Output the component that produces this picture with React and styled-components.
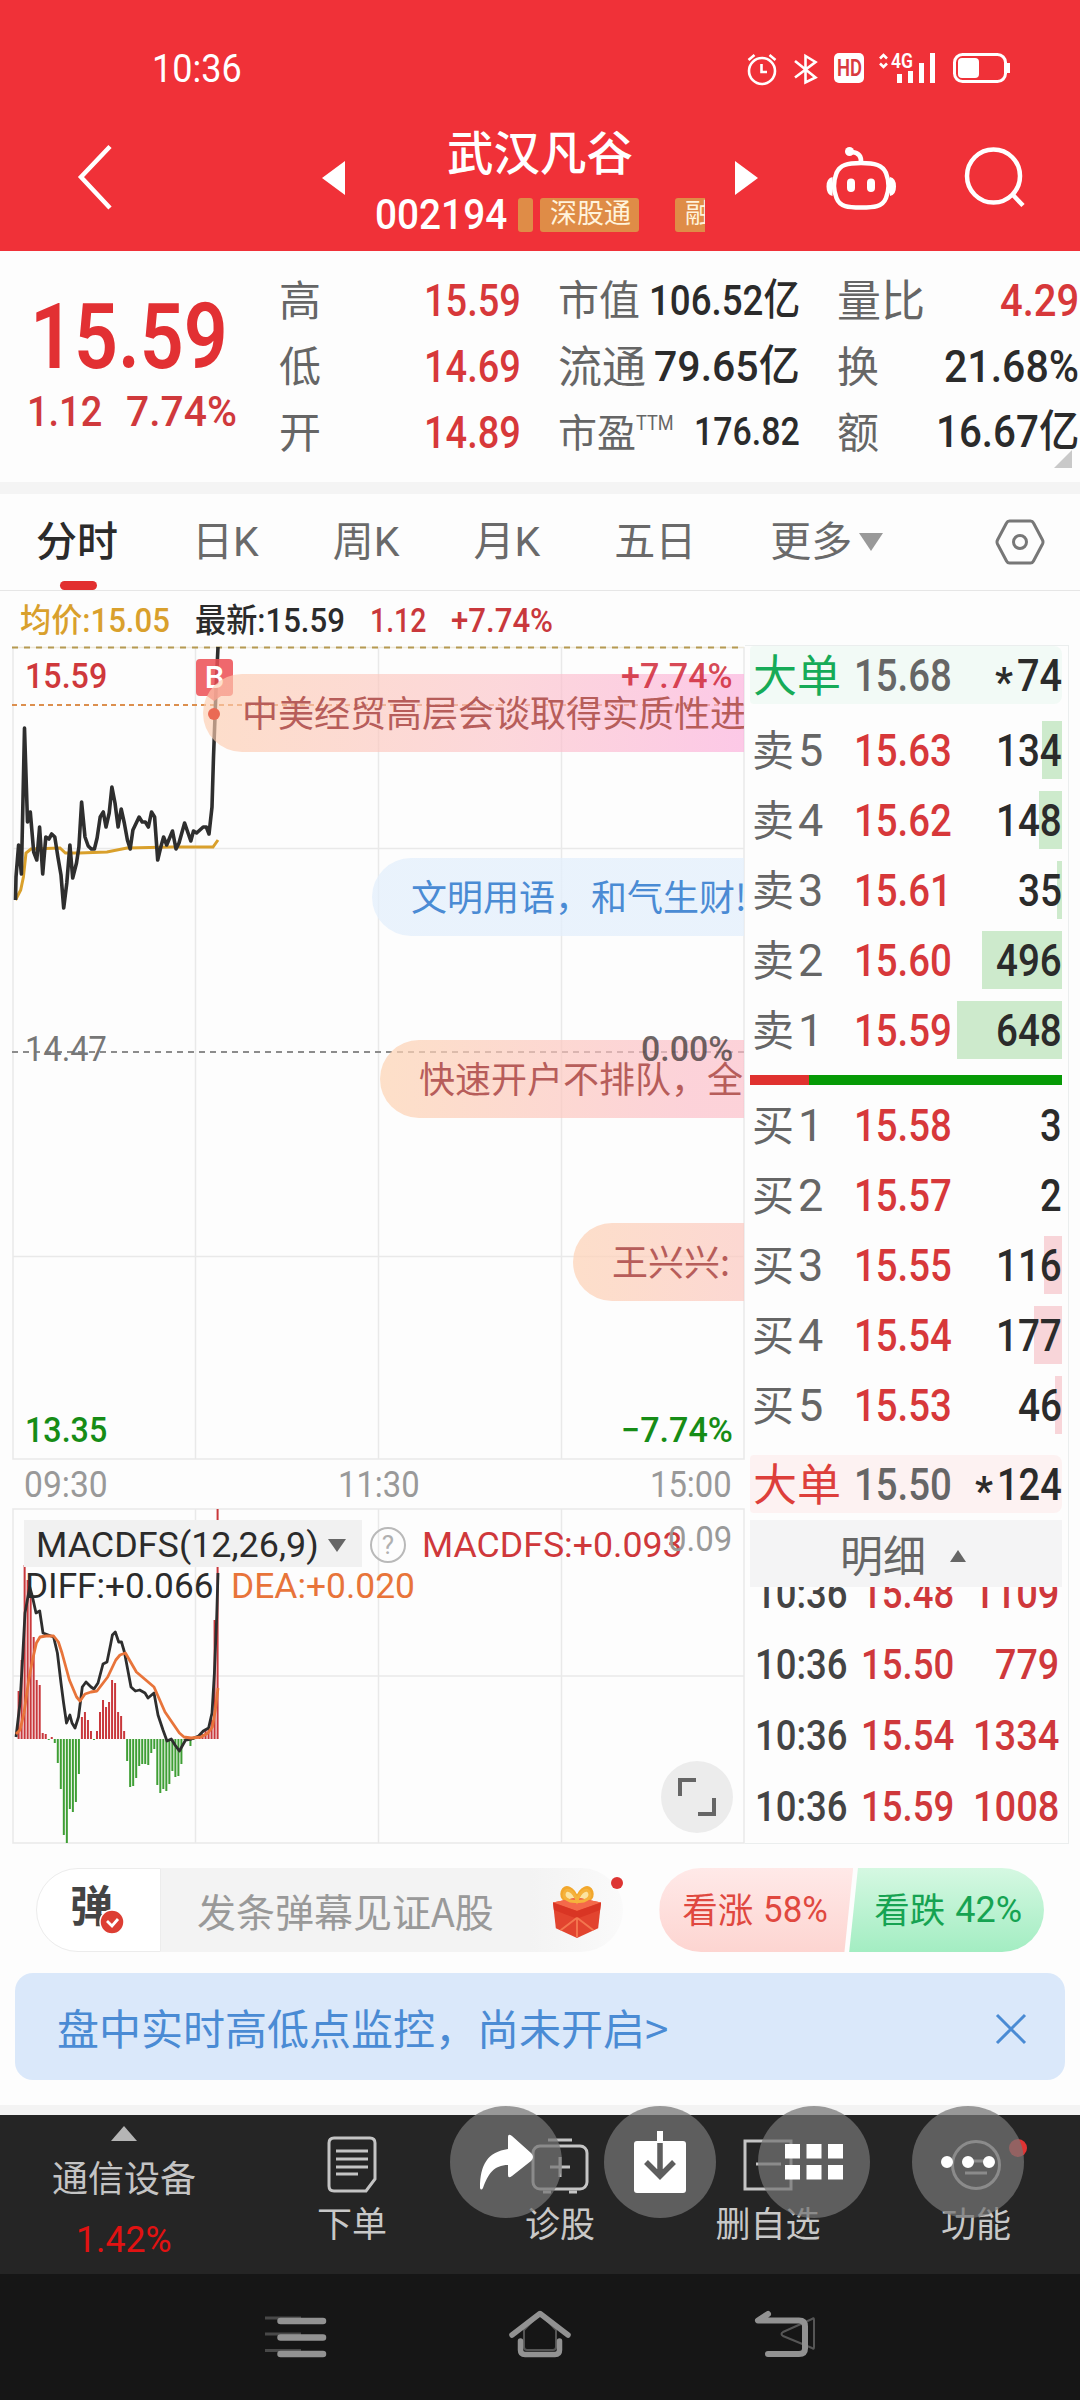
import { useLayoutEffect, useRef, useState } from "react";
import styled, { createGlobalStyle } from "styled-components";

const sells = [
  { label: "卖", level: "5", price: "15.63", volume: "134", bar: 20 },
  { label: "卖", level: "4", price: "15.62", volume: "148", bar: 23 },
  { label: "卖", level: "3", price: "15.61", volume: "35", bar: 5 },
  { label: "卖", level: "2", price: "15.60", volume: "496", bar: 80 },
  { label: "卖", level: "1", price: "15.59", volume: "648", bar: 105 },
];

const buys = [
  { label: "买", level: "1", price: "15.58", volume: "3", bar: 0 },
  { label: "买", level: "2", price: "15.57", volume: "2", bar: 0 },
  { label: "买", level: "3", price: "15.55", volume: "116", bar: 18 },
  { label: "买", level: "4", price: "15.54", volume: "177", bar: 28 },
  { label: "买", level: "5", price: "15.53", volume: "46", bar: 7 },
];

const ticks = [
  { time: "10:36", price: "15.48", volume: "1109" },
  { time: "10:36", price: "15.50", volume: "779" },
  { time: "10:36", price: "15.54", volume: "1334" },
  { time: "10:36", price: "15.59", volume: "1008" },
];

const pricePoints =
  "15.5,900 16,877 18.6,845 21.4,874 24.5,728 27.5,822 30.3,812 33.7,852 36.8,860 39.6,827 42.7,874 45.8,837 48.9,839 51.7,834 54.8,837 57.9,857 61,875 63.7,908 66.8,883 69.9,845 72.7,878 76.5,863 78.9,847 81.6,802 85,837 88.2,846 91.3,849 94.4,849 97.1,838 100.2,817 103.3,812 106,827 109.2,813 111.9,787 115,803 118.1,827 121.2,809 124.3,823 127.4,840 130.2,849 132.9,830 139.1,817 142.2,822 145.3,822 148.4,827 151.5,812 154.6,817 157.7,860 160.8,847 163.6,837 166.7,845 172.5,831 176,849 179,843 184.6,823 190.8,841 193.5,831 196.6,833 203.2,827 206.3,827 209,834 212,807 213.5,757 216,690 218,647";
const averagePoints =
  "15.5,900 20.7,890 23.4,877 26,853 31,849 60,848 65.4,853 79,853 107,852 127,848 172,847 213,847 218,840";
const diffPoints =
  "16,1737 20,1703 22.5,1660 25,1613 29.7,1587 32.5,1597 36,1613 39.7,1611 43,1633 53.6,1637 57.4,1653 61,1683 63.6,1703 66.5,1723 69.9,1715 72,1723 75,1728 78.5,1717 82.3,1687 86,1682 91,1687 94,1689 98,1683 103,1664 107,1662 110.5,1645 112.4,1635 115.3,1632 118.7,1642 121.5,1642 124.4,1652 127.8,1670 131,1687 135.4,1691 139.7,1690 145,1693 148,1698 154,1693 158,1715 163,1730 167,1741 171.3,1739 175,1745 179.4,1751 185.6,1740 191.4,1739 198.6,1736 203.3,1731 208.6,1728 212,1713 214.4,1673 216.7,1617 218,1573";
const deaPoints =
  "16,1734 20,1730 24,1713 28.7,1680 32.5,1660 36.4,1643 40,1637 46,1636 53.6,1636 58.4,1642 62,1653 69.4,1680 76.6,1697 80,1701 85,1694 91,1692 97,1691 107.7,1677 115.8,1660 120,1655 125.4,1653 136.4,1672 154,1687 165,1712 179.4,1733 184,1737 191,1738 201,1737 208,1733 212.4,1727 215.3,1710 218,1688";
const macdBars = [
  48, 79, 174, 159, 142, 102, 59, 54, 6, 5, -1, 2, -4, -24, -50, -96, -104, -70, -73, -63, -35, 22, 27,
  19, 8, -1, 8, 27, 39, 32, 37, 59, 56, 27, 23, 8, -22, -48, -47, -39, -27, -25, -25, -26, -14, -10, -46,
  -54, -50, -52, -45, -32, -38, -37, -25, -1, -1, -7, -1, 2, 3, 5, 9, 10, 19, 119, 230,
];

// condensed figures: squeezes its text to a known width
function Fit({ width, size, weight = 500, color, children }) {
  const ref = useRef(null);
  const [scale, setScale] = useState(1);

  useLayoutEffect(() => {
    setScale(width / ref.current.offsetWidth);
  }, [width, size, weight, children]);

  return (
    <FitBox $width={width} $size={size} $weight={weight} $color={color}>
      <FitText ref={ref} style={{ transform: `scaleX(${scale})` }}>
        {children}
      </FitText>
    </FitBox>
  );
}

function BigOrder({ color, background, price, volume, volumeWidth }) {
  return (
    <BigRow $background={background}>
      <Cn $size={44} $color={color}>大单</Cn>
      <Fit width={98} size={45} color="#666">{price}</Fit>
      <BigVolume>
        <Star>*</Star>
        <Fit width={volumeWidth} size={45}>{volume}</Fit>
      </BigVolume>
    </BigRow>
  );
}

function OrderRow({ item, tint }) {
  return (
    <Order>
      <Cn $size={42} $color="#666">{item.label}</Cn>
      <Fit width={25} size={45} weight={400} color="#666">{item.level}</Fit>
      <OrderPrice>
        <Fit width={98} size={45} color="#d7383a">{item.price}</Fit>
      </OrderPrice>
      <Volume>
        <VolumeBar $tint={tint} style={{ width: item.bar }} />
        <Fit width={item.volume.length * 22} size={45}>{item.volume}</Fit>
      </Volume>
    </Order>
  );
}

function StatusIcons() {
  return (
    <svg width="264" height="36" viewBox="746 51 264 36" fill="none" stroke="#fff">
      <circle cx="762" cy="71" r="13" strokeWidth="2.6" />
      <path d="M761.500 64v8h5.500M748.500 60l6-5M775.500 60l-6-5" strokeWidth="2.6" />
      <path d="M795 61l20.500 16.500-10 5V56l10 6-20.500 15.500" strokeWidth="2.6" />
      <rect x="834" y="53" width="30" height="30" rx="5" fill="#fff" stroke="none" />
      <path d="M880 58.500l3.500-3.500 3.500 3.500M880 63.500l3.500 3.500 3.500-3.500" strokeWidth="2.6" />
      <path d="M899.500 74v9M910.500 71v12M921.500 63v20M932.500 53v30" strokeWidth="5" />
      <rect x="954.500" y="54.500" width="51" height="27" rx="8" strokeWidth="3" />
      <rect x="958" y="58" width="21" height="20" rx="4" fill="#fff" stroke="none" />
      <path d="M1008.500 63v10" strokeWidth="3" />
      <StatusGlyph x="837" y="76" $fill="#d83a40" $size={23} textLength="25" lengthAdjust="spacingAndGlyphs">HD</StatusGlyph>
      <StatusGlyph x="891" y="68" $fill="#fff" $size={20} textLength="22" lengthAdjust="spacingAndGlyphs">4G</StatusGlyph>
    </svg>
  );
}

function PriceChart() {
  return (
    <svg width="733" height="814" viewBox="12 646 733 814" fill="none">
      <path d="M13 647V1459H744V647M195.500 647V1459M378.500 647V1459M561.500 647V1459M13 848.500H744M13 1256.500H744" stroke="#e9e9e9" strokeWidth="1.500" />
      <path d="M12 647.500H744" stroke="#efe9dc" strokeWidth="1.500" />
      <path d="M12 647.500H744" stroke="#b69a52" strokeWidth="2" strokeDasharray="6 6" />
      <path d="M12 705H744" stroke="#dc8f4e" strokeWidth="2" strokeDasharray="5 4" />
      <path d="M12 1052H744" stroke="#8c8c8c" strokeWidth="2" strokeDasharray="6 5" />
      <polyline points={averagePoints} stroke="#d9a02c" strokeWidth="3" />
      <polyline points={pricePoints} stroke="#2e2e2e" strokeWidth="3.600" strokeLinejoin="round" />
    </svg>
  );
}

function MacdChart() {
  return (
    <svg width="733" height="336" viewBox="12 1508 733 336" fill="none">
      <rect x="13" y="1509" width="731" height="334" stroke="#e9e9e9" strokeWidth="1.500" />
      <path d="M195.500 1509V1843M378.500 1509V1843M561.500 1509V1843M13 1676H744" stroke="#e9e9e9" strokeWidth="1.500" />
      {macdBars.map((value, i) => (
        <rect
          key={i}
          x={17.6 + i * 3.015}
          y={value > 0 ? 1739 - value : 1739}
          width="2"
          height={Math.abs(value)}
          fill={value > 0 ? "#c9383c" : "#3f9f35"}
        />
      ))}
      <polyline points={diffPoints} stroke="#2e2e2e" strokeWidth="2.800" strokeLinejoin="round" />
      <polyline points={deaPoints} stroke="#e8743a" strokeWidth="2.800" strokeLinejoin="round" />
    </svg>
  );
}

function Gift() {
  return (
    <svg width="50" height="54" viewBox="0 0 52 56">
      <path d="M26 18C16 19 9 14 11 7c2-7 11-5 15 8 4-13 13-15 15-8 2 7-5 12-15 11z" fill="#fbe3a0" stroke="#f2a72c" strokeWidth="4" />
      <path d="M1 18l25-5 25 5-3 27-22 10L4 45z" fill="#e2442f" />
      <path d="M1 18l25-5 25 5-25 9z" fill="#f4694a" />
      <path d="M1 18l25 9 25-9-1 8-24 9-24-9z" fill="#d93524" />
      <path d="M26 34L9 47M26 34l17 13M26 34v20" stroke="#f3764f" strokeWidth="2" />
      <path d="M26 17C17 18 11 13 13 8c2-5 9-3 13 8 4-11 11-13 13-8 2 5-4 10-13 9z" fill="none" stroke="#f5b23c" strokeWidth="3" />
    </svg>
  );
}

function App() {
  return (
    <Page>
      <GlobalStyle />
      <Header>
        <StatusBar>
          <Fit width={90} size={38} weight={400}>10:36</Fit>
          <StatusIcons />
        </StatusBar>
        <TitleBar>
          <BackIcon width="40" height="68" viewBox="0 0 40 68" fill="none">
            <path d="M36 2.500L7 33l29 31" stroke="#fff" strokeWidth="4.500" />
          </BackIcon>
          <svg width="24" height="36" viewBox="0 0 24 36"><path d="M24 1v34L1 18z" fill="#fff" /></svg>
          <Stock>
            <Cn $size={46.5} $weight={500}>武汉凡谷</Cn>
            <CodeRow>
              <Fit width={132} size={42}>002194</Fit>
              <Tags>
                <Tag $width={15} />
                <Tag $width={99}>深股通</Tag>
                <Tag $width={54} $last>融</Tag>
              </Tags>
            </CodeRow>
          </Stock>
          <svg width="24" height="36" viewBox="0 0 24 36"><path d="M0 1v34L23 18z" fill="#fff" /></svg>
          <RobotIcon width="72" height="66" viewBox="825 144 72 66" fill="none">
            <path d="M861 162C847 162 840 164 836.500 172q-5 13 0 25C840 206 848 206.500 861 206.500s21.500-.5 25-9.500q5-12 0-25C882.500 164 875 162 861 162z" stroke="#fff" strokeWidth="4.500" />
            <path d="M832.500 176q-6 1-6 9.500t6 9.500zM890 176q6 1 6 9.500t-6 9.500z" fill="#fff" />
            <path d="M861 162q1-10-9-11" stroke="#fff" strokeWidth="4.500" />
            <circle cx="849.500" cy="150.500" r="4.500" fill="#fff" />
            <path d="M851 181.500v5.500M871 181.500v5.500" stroke="#fff" strokeWidth="8" strokeLinecap="round" />
          </RobotIcon>
          <svg width="64" height="64" viewBox="964 147 64 64" fill="none" stroke="#fff" strokeWidth="4.500">
            <circle cx="994.500" cy="177" r="26.500" />
            <path d="M1014 196l10 10.500" />
          </svg>
        </TitleBar>
      </Header>

      <Quote>
        <PriceBlock>
          <Fit width={198} size={91} weight={600} color="#e23033">15.59</Fit>
          <Changes>
            <Fit width={75} size={43} color="#d0393c">1.12</Fit>
            <Fit width={111} size={43} color="#d0393c">7.74%</Fit>
          </Changes>
        </PriceBlock>
        <StatColumn>
          <Stat><Cn $size={42} $color="#666">高</Cn><Fit width={97} size={45} color="#d7383a">15.59</Fit></Stat>
          <Stat><Cn $size={42} $color="#666">低</Cn><Fit width={97} size={45} color="#d7383a">14.69</Fit></Stat>
          <Stat><Cn $size={42} $color="#666">开</Cn><Fit width={97} size={45} color="#d7383a">14.89</Fit></Stat>
        </StatColumn>
        <StatColumn>
          <Stat><Cn $size={41} $color="#666">市值</Cn><Fit width={151} size={43}>106.52亿</Fit></Stat>
          <Stat><Cn $size={44} $color="#666">流通</Cn><Fit width={146} size={43}>79.65亿</Fit></Stat>
          <Stat>
            <Cn $size={39} $color="#666">市盈</Cn>
            <Ttm><Fit width={38} size={21} weight={400} color="#666">TTM</Fit></Ttm>
            <Push />
            <Fit width={106} size={39}>176.82</Fit>
          </Stat>
        </StatColumn>
        <StatColumn $wide>
          <Stat><Cn $size={44} $color="#666">量比</Cn><Fit width={79} size={45} color="#d7383a">4.29</Fit></Stat>
          <Stat><Cn $size={42} $color="#666">换</Cn><Fit width={135} size={45}>21.68%</Fit></Stat>
          <Stat><Cn $size={42} $color="#666">额</Cn><Fit width={143} size={44}>16.67亿</Fit></Stat>
        </StatColumn>
        <Corner />
      </Quote>

      <Tabs>
        <Tab $active>分时</Tab>
        <Tab>日K</Tab>
        <Tab>周K</Tab>
        <Tab>月K</Tab>
        <Tab>五日</Tab>
        <Tab>更多<Down $w={12} $h={18} $color="#999" /></Tab>
        <Settings width="52" height="48" viewBox="0 0 52 48" fill="none" stroke="#777" strokeWidth="3">
          <path d="M15.500 3h21q2 0 3 2l9 17q1 2 0 4l-9 17q-1 2-3 2h-21q-2 0-3-2l-9-17q-1-2 0-4l9-17q1-2 3-2z" />
          <circle cx="26" cy="24" r="6.500" />
        </Settings>
      </Tabs>

      <InfoRow>
        <Fit width={150} size={33} color="#d9a02c">均价:15.05</Fit>
        <Fit width={150} size={33}>最新:15.59</Fit>
        <Fit width={56} size={33} color="#c9383c">1.12</Fit>
        <Fit width={102} size={33} color="#c9383c">+7.74%</Fit>
      </InfoRow>

      <Body>
        <Charts>
          <Plot>
            <PriceChart />
            <Label $left={13} $top={13}><Fit width={82} size={35} color="#cf383b">15.59</Fit></Label>
            <Label $left={13} $top={386}><Fit width={82} size={35} weight={400} color="#777">14.47</Fit></Label>
            <Label $left={13} $top={767}><Fit width={82} size={35} color="#168c16">13.35</Fit></Label>
            <Label $right={12} $top={767}><Fit width={112} size={35} color="#168c16">−7.74%</Fit></Label>
            <BuyMark>B</BuyMark>
            <Danmaku $left={191} $top={28}>中美经贸高层会谈取得实质性进</Danmaku>
            <Danmaku $left={360} $top={212} $fill="blue">文明用语，和气生财!</Danmaku>
            <Danmaku $left={368} $top={394} $fill="mid">快速开户不排队，全</Danmaku>
            <Danmaku $left={561} $top={577} $fill="start">王兴兴:</Danmaku>
            <BuyDot />
            <Label $right={12} $top={13}><Fit width={112} size={35} color="rgba(208, 40, 56, 0.85)">+7.74%</Fit></Label>
            <Label $right={12} $top={386}><Fit width={92} size={35} color="rgba(70, 60, 60, 0.78)">0.00%</Fit></Label>
          </Plot>
          <Hours>
            <Fit width={84} size={36} weight={400} color="#999">09:30</Fit>
            <Fit width={82} size={36} weight={400} color="#999">11:30</Fit>
            <Fit width={82} size={36} weight={400} color="#999">15:00</Fit>
          </Hours>
          <Plot>
            <Selector />
            <MacdChart />
            <Indicator>
              <Line $height={48}>
                <Fit width={283} size={35} weight={400}>MACDFS(12,26,9)</Fit>
                <Down $w={9} $h={13} $color="#666" />
                <Help>?</Help>
                <Fit width={261} size={35} weight={400} color="#cf383b">MACDFS:+0.093</Fit>
              </Line>
              <Line $height={34}>
                <Diff><Fit width={188} size={35} weight={400}>DIFF:+0.066</Fit></Diff>
                <Fit width={184} size={35} weight={400} color="#e8743a">DEA:+0.020</Fit>
              </Line>
            </Indicator>
            <Label $right={13} $top={14}><Fit width={64} size={35} weight={400} color="#999">0.09</Fit></Label>
            <Expand>
              <svg width="40" height="40" viewBox="0 0 40 40" fill="none" stroke="#666" strokeWidth="4">
                <path d="M3 19V3h16M21 37h16V21" />
              </svg>
            </Expand>
          </Plot>
        </Charts>

        <Book>
          <BigOrder color="#16ab58" background="#f2faf6" price="15.68" volume="74" volumeWidth={45} />
          <Group $top={11}>
            {sells.map((item) => <OrderRow key={item.level} item={item} tint="#cdeacc" />)}
          </Group>
          <Ratio />
          <Group $top={5}>
            {buys.map((item) => <OrderRow key={item.level} item={item} tint="#f8d5d9" />)}
          </Group>
          <Group $top={15}>
            <BigOrder color="#dd3f3b" background="#fdf2f2" price="15.50" volume="124" volumeWidth={65} />
          </Group>
          <Detail>
            <Cn $size={43} $color="#666">明细</Cn>
            <Up $w={8.5} $h={12} $color="#666" />
          </Detail>
          <Ticks>
            {ticks.map((tick) => (
              <Tick key={tick.price}>
                <Fit width={93} size={42} color="#444">{tick.time}</Fit>
                <Fit width={93} size={42} color="#cf383b">{tick.price}</Fit>
                <TickVolume>
                  <Fit width={tick.volume.length * 21.5} size={42} color="#cf383b">{tick.volume}</Fit>
                </TickVolume>
              </Tick>
            ))}
          </Ticks>
        </Book>
      </Body>

      <Actions>
        <CommentBox>
          <Toggle>
            弹
            <Check>
              <svg width="26" height="26" viewBox="0 0 26 26" fill="none">
                <circle cx="13" cy="13" r="12" fill="#dd3e33" stroke="#fff" strokeWidth="1.500" />
                <path d="M8 12l5 5 6-7" stroke="#fff" strokeWidth="2.800" />
              </svg>
            </Check>
          </Toggle>
          <Field>
            <Cn $size={39} $color="#999">发条弹幕见证A股</Cn>
            <Gift />
          </Field>
          <RedDot />
        </CommentBox>
        <Vote $up><Cn $size={35.5}>看涨</Cn><Fit width={65} size={36} weight={400}>58%</Fit></Vote>
        <Vote><Cn $size={35.5}>看跌</Cn><Fit width={67} size={36} weight={400}>42%</Fit></Vote>
      </Actions>

      <Banner>
        <Cn $size={42}>盘中实时高低点监控，尚未开启&gt;</Cn>
        <svg width="32" height="32" viewBox="0 0 32 32"><path d="M2 2l28 28M30 2L2 30" stroke="#4a8bd4" strokeWidth="3" /></svg>
      </Banner>

      <BottomBar>
        <Sector>
          <Up $w={13} $h={15} $color="#b5b5b5" />
          <Cn $size={36} $color="#c4c4c4">通信设备</Cn>
          <Fit width={96} size={36} weight={400} color="#e11212">1.42%</Fit>
        </Sector>
        <MenuItem>
          <svg width="56" height="60" viewBox="0 0 56 60" fill="none" stroke="#c4c4c4" strokeWidth="3">
            <path d="M10 3h36q5 0 5 5v36l-9 12H10q-5 0-5-5V8q0-5 5-5z" />
            <path d="M12 16h32M12 24h32M12 32h32M12 39h22" />
          </svg>
          下单
        </MenuItem>
        <MenuItem>
          <svg width="60" height="60" viewBox="0 0 60 60" fill="none" stroke="#c4c4c4" strokeWidth="3">
            <rect x="3" y="11" width="54" height="43" rx="7" />
            <path d="M18 5h24M20 32h20M30 22v20M13 57h8M39 57h8" />
          </svg>
          诊股
        </MenuItem>
        <MenuItem>
          <svg width="56" height="60" viewBox="0 0 56 60" fill="none" stroke="#c4c4c4" strokeWidth="3">
            <path d="M51 54H5V6h46zM16 29h25" />
          </svg>
          删自选
        </MenuItem>
        <MenuItem>
          <svg width="56" height="60" viewBox="0 0 56 60" fill="none" stroke="#c4c4c4" strokeWidth="3">
            <circle cx="28" cy="30" r="23.500" />
            <path d="M25 26h15M17 38h22" />
          </svg>
          功能
        </MenuItem>
        <MenuDot />
        <Bubble $left={449.5}>
          <svg width="56" height="56" viewBox="0 0 56 56">
            <path d="M2 54C2 30 10 18 30 15V3q0-4 4-1l19 17q4 4 0 8L34 42q-4 3-4-1V31C16 31 10 40 5 54q-2 3-3 0z" fill="#fff" />
          </svg>
        </Bubble>
        <Bubble $left={604}>
          <svg width="54" height="64" viewBox="0 0 54 64">
            <rect x="1" y="11" width="52" height="52" rx="3" fill="#fff" />
            <path d="M27 1v12" stroke="#fff" strokeWidth="6" />
            <path d="M27 13v32M13 32l14 14 14-14" stroke="#5e5e5e" strokeWidth="5.500" fill="none" />
          </svg>
        </Bubble>
        <Bubble $left={758}>
          <svg width="58" height="36" viewBox="0 0 58 36">
            <path d="M0 0h15v14.500H0zM21.500 0h15v14.500h-15zM43 0h15v14.500H43zM0 21h15v14.500H0zM21.500 21h15v14.500h-15zM43 21h15v14.500H43z" fill="#fff" />
          </svg>
        </Bubble>
        <Bubble $left={912}>
          <svg width="54" height="12" viewBox="0 0 54 12"><path d="M6 6h0M27 6h0M48 6h0" stroke="#fff" strokeWidth="12" strokeLinecap="round" /></svg>
        </Bubble>
      </BottomBar>

      <SystemBar>
        <svg width="64" height="48" viewBox="262 2310 64 48" fill="none">
          <path d="M264 2318h36M264 2334h36M264 2350.500h36" stroke="#484848" strokeWidth="3" />
          <path d="M279.500 2321h42.500M279.500 2337.500h42.500M279.500 2354h42.500" stroke="#929292" strokeWidth="6.500" strokeLinecap="round" />
        </svg>
        <svg width="64" height="52" viewBox="508 2308 64 52" fill="none" strokeLinecap="round" strokeLinejoin="round">
          <path d="M524 2330v17q0 3 3 3h26q3 0 3-3v-17l-16-17z" stroke="#555" strokeWidth="2" />
          <path d="M512 2335l28-21.500 28 21.500M520.500 2341v9q0 4.500 4.500 4.500h30q4.500 0 4.500-4.500v-9" stroke="#929292" strokeWidth="5.500" />
        </svg>
        <svg width="64" height="52" viewBox="753 2308 64 52" fill="none" strokeLinecap="round" strokeLinejoin="round">
          <path d="M812 2319q2-2 2 1v27q0 3-2 1l-29-12q-3-2 0-4z" stroke="#555" strokeWidth="2" />
          <path d="M768 2314l-10 6.500h41q6 0 6 6v22q0 5.500-6 5.500h-31" stroke="#929292" strokeWidth="6" />
        </svg>
      </SystemBar>
    </Page>
  );
}

export default App;

const GlobalStyle = createGlobalStyle`
  * { box-sizing: border-box; }
  body { margin: 0; background: #fff; }
  svg { display: block; flex: none; }
`;

const Page = styled.div`
  width: 1080px;
  height: 2400px;
  display: flex;
  flex-direction: column;
  overflow: hidden;
  background: #fdfdfd;
  color: #2b2b2b;
  font-family: Roboto, "Noto Sans CJK SC", sans-serif;
`;

const FitBox = styled.span`
  display: block;
  flex: none;
  width: ${(p) => p.$width}px;
  font-size: ${(p) => p.$size}px;
  font-weight: ${(p) => p.$weight};
  line-height: 1;
  height: 1em;
  color: ${(p) => p.$color || "inherit"};
`;
const FitText = styled.span`
  display: inline-block;
  line-height: 1;
  white-space: nowrap;
  transform-origin: left center;
`;
const Cn = styled.span`
  display: block;
  flex: none;
  margin-top: -0.1em;
  font-family: "Noto Sans CJK SC", sans-serif;
  font-size: ${(p) => p.$size}px;
  font-weight: ${(p) => p.$weight || 400};
  line-height: 1;
  white-space: nowrap;
  color: ${(p) => p.$color || "inherit"};
`;
const Push = styled.div`
  flex: 1;
`;
const Up = styled.i`
  border: solid transparent;
  border-width: 0 ${(p) => p.$w}px ${(p) => p.$h}px;
  border-bottom-color: ${(p) => p.$color};
`;
const Down = styled.i`
  border: solid transparent;
  border-width: ${(p) => p.$h}px ${(p) => p.$w}px 0;
  border-top-color: ${(p) => p.$color};
`;

const Header = styled.header`
  height: 251px;
  flex: none;
  background: #f03138;
  color: #fff;
`;
const StatusBar = styled.div`
  height: 120px;
  padding: 17px 70px 0 152px;
  display: flex;
  align-items: center;
  justify-content: space-between;
`;
const StatusGlyph = styled.text`
  font-family: Roboto, sans-serif;
  font-size: ${(p) => p.$size}px;
  font-weight: 600;
  fill: ${(p) => p.$fill};
  stroke: none;
`;
const TitleBar = styled.div`
  height: 131px;
  padding: 0 53px 15px 74px;
  display: flex;
  align-items: center;
`;
const BackIcon = styled.svg`
  margin-right: 207px;
`;
const Stock = styled.div`
  width: 390px;
  align-self: flex-start;
  padding: 12px 30px 0 30px;
  display: flex;
  flex-direction: column;
  align-items: center;
`;
const CodeRow = styled.div`
  width: 330px;
  height: 34px;
  margin-top: 24px;
  display: flex;
  align-items: center;
  justify-content: space-between;
`;
const Tags = styled.div`
  width: 187px;
  display: flex;
  gap: 7px;
  overflow: hidden;
`;
const Tag = styled.span`
  flex: none;
  width: ${(p) => p.$width}px;
  height: 34px;
  margin-left: ${(p) => (p.$last ? 29 : 0)}px;
  padding-left: ${(p) => (p.$width > 20 ? 10 : 0)}px;
  border-radius: 3px;
  background: #df8c47;
  color: #fff3dc;
  font-size: 27px;
  line-height: 33px;
`;
const RobotIcon = styled.svg`
  margin: 0 66px 0 66px;
`;

const Quote = styled.section`
  position: relative;
  height: 243px;
  flex: none;
  display: flex;
  gap: 37px;
  border-bottom: 12px solid #f4f4f4;
`;
const PriceBlock = styled.div`
  width: 242px;
  padding: 41px 0 0 30px;
`;
const Changes = styled.div`
  margin: 7px 0 0 -3px;
  display: flex;
  gap: 24px;
`;
const StatColumn = styled.div`
  width: 242px;
  padding-top: 16px;
`;
const Stat = styled.div`
  height: 66px;
  display: flex;
  align-items: center;
  justify-content: space-between;
`;
const Ttm = styled.div`
  margin: 0 0 18px 0;
`;
const Corner = styled.i`
  position: absolute;
  right: 8px;
  bottom: 14px;
  border: solid transparent;
  border-width: 0 0 18px 18px;
  border-bottom-color: #c9c9c9;
`;

const Tabs = styled.nav`
  height: 97px;
  flex: none;
  padding: 0 34px 0 36px;
  display: flex;
  align-items: center;
  gap: 74px;
  border-bottom: 1px solid #e6e6e6;
`;
const Tab = styled.div`
  position: relative;
  height: 96px;
  display: flex;
  align-items: center;
  gap: 7px;
  font-size: 41px;
  line-height: 102px;
  white-space: nowrap;
  font-weight: ${(p) => (p.$active ? 500 : 400)};
  color: ${(p) => (p.$active ? "#2b2b2b" : "#6a6a6a")};
  &::after {
    content: "";
    display: ${(p) => (p.$active ? "block" : "none")};
    position: absolute;
    left: 24px;
    bottom: 0;
    width: 37px;
    height: 9px;
    border-radius: 5px;
    background: #e22f2f;
  }
`;
const Settings = styled.svg`
  margin-left: auto;
`;

const InfoRow = styled.div`
  height: 54px;
  flex: none;
  padding: 5px 0 0 20px;
  display: flex;
  align-items: center;
  gap: 25px;
`;

const Body = styled.main`
  height: 1199px;
  flex: none;
  display: flex;
  padding-left: 12px;
`;
const Charts = styled.div`
  width: 733px;
  flex: none;
  padding-top: 1px;
`;
const Plot = styled.div`
  position: relative;
  overflow: hidden;
`;
const Label = styled.div`
  position: absolute;
  top: ${(p) => p.$top}px;
  ${(p) => (p.$left ? `left: ${p.$left}px;` : `right: ${p.$right}px;`)}
`;
const BuyMark = styled.div`
  position: absolute;
  left: 184px;
  top: 13px;
  width: 37px;
  height: 37px;
  border-radius: 4px;
  background: rgba(236, 78, 84, 0.85);
  color: #fff;
  font-size: 31px;
  font-weight: 500;
  line-height: 38px;
  text-align: center;
  &::after {
    content: "";
    position: absolute;
    left: 11px;
    top: 37px;
    border: solid transparent;
    border-width: 5px 7px 0;
    border-top-color: rgba(236, 78, 84, 0.85);
  }
`;
const BuyDot = styled.i`
  position: absolute;
  left: 196px;
  top: 62px;
  width: 12px;
  height: 12px;
  border-radius: 50%;
  background: #ea6a54;
`;
const fills = {
  full: "rgba(253, 205, 175, 0.65), rgba(252, 195, 200, 0.65) 55%, rgba(252, 176, 220, 0.68)",
  mid: "rgba(253, 212, 180, 0.72), rgba(252, 190, 200, 0.68) 85%",
  start: "rgba(253, 212, 185, 0.75), rgba(252, 200, 192, 0.7)",
  blue: "rgba(227, 239, 252, 0.75), rgba(227, 239, 252, 0.75)",
};
const Danmaku = styled.div`
  position: absolute;
  left: ${(p) => p.$left}px;
  right: 1px;
  top: ${(p) => p.$top}px;
  height: 78px;
  padding-left: 39px;
  overflow: hidden;
  border-radius: 39px 0 0 39px;
  background: linear-gradient(90deg, ${(p) => fills[p.$fill || "full"]});
  color: ${(p) => (p.$fill === "blue" ? "#4a8bd4" : "#b75d5a")};
  font-family: "Noto Sans CJK SC", sans-serif;
  font-size: 36px;
  line-height: 75px;
  white-space: nowrap;
`;
const Hours = styled.div`
  height: 48px;
  padding: 2px 13px 0 12px;
  display: flex;
  align-items: center;
  justify-content: space-between;
`;
const Selector = styled.div`
  position: absolute;
  left: 12px;
  top: 12px;
  width: 338px;
  height: 47px;
  background: #f1f1f1;
`;
const Indicator = styled.div`
  position: absolute;
  left: 13px;
  top: 13px;
`;
const Line = styled.div`
  height: ${(p) => p.$height}px;
  display: flex;
  align-items: center;
  ${Down} {
    margin: 0 24px 0 9px;
  }
  &:first-child {
    padding-left: 11px;
  }
`;
const Help = styled.div`
  width: 36px;
  height: 36px;
  margin-right: 16px;
  border: 2px solid #b9b9b9;
  border-radius: 50%;
  color: #b0b0b0;
  font-size: 26px;
  line-height: 33px;
  text-align: center;
`;
const Diff = styled.div`
  margin-right: 18px;
`;
const Expand = styled.div`
  position: absolute;
  left: 649px;
  top: 253px;
  width: 72px;
  height: 72px;
  border-radius: 50%;
  background: #ececec;
  display: flex;
  align-items: center;
  justify-content: center;
`;

const Book = styled.aside`
  width: 324px;
  flex: none;
  padding: 0 6px 0 5px;
  border: solid #ebeeee;
  border-width: 1px 1px 1px 0;
`;
const Group = styled.div`
  padding-top: ${(p) => p.$top}px;
`;
const BigRow = styled.div`
  height: 58px;
  padding-left: 3px;
  display: flex;
  align-items: center;
  gap: 13px;
  border-radius: 4px 8px 8px 4px;
  background: ${(p) => p.$background};
`;
const BigVolume = styled.div`
  margin-left: auto;
  display: flex;
  align-items: center;
  gap: 4px;
`;
const Star = styled.span`
  height: 26px;
  font-size: 40px;
  font-weight: 600;
  line-height: 42px;
`;
const Order = styled.div`
  height: 70px;
  padding-left: 2px;
  display: flex;
  align-items: center;
  gap: 4px;
`;
const OrderPrice = styled.div`
  margin-left: 27px;
`;
const Volume = styled.div`
  position: relative;
  flex: 1;
  height: 58px;
  display: flex;
  align-items: center;
  justify-content: flex-end;
  ${FitBox} {
    position: relative;
  }
`;
const VolumeBar = styled.i`
  position: absolute;
  right: 0;
  top: 0;
  height: 58px;
  background: ${(p) => p.$tint};
`;
const Ratio = styled.div`
  height: 10px;
  margin-top: 10px;
  background: linear-gradient(90deg, #e0312f 59px, #069a06 59px);
`;
const Detail = styled.div`
  height: 67px;
  margin-top: 7px;
  padding: 5px 6px 0 0;
  display: flex;
  align-items: center;
  justify-content: center;
  gap: 24px;
  background: #f4f4f5;
`;
const Ticks = styled.div`
  height: 255px;
  overflow: hidden;
`;
const Tick = styled.div`
  height: 71px;
  padding: 0 3px 0 5px;
  display: flex;
  align-items: center;
  gap: 13px;
  &:first-child {
    margin-top: -29px;
  }
`;
const TickVolume = styled.div`
  margin-left: auto;
`;

const Actions = styled.section`
  height: 129px;
  flex: none;
  padding: 24px 36px 0;
  display: flex;
`;
const CommentBox = styled.div`
  position: relative;
  width: 588px;
  height: 84px;
  margin-right: 36px;
  display: flex;
`;
const Toggle = styled.div`
  position: relative;
  width: 125px;
  padding-left: 33px;
  border: 1px solid #ececec;
  border-radius: 42px 0 0 42px;
  background: #fff;
  color: #444;
  font-size: 43px;
  font-weight: 700;
  line-height: 76px;
`;
const Check = styled.span`
  position: absolute;
  left: 62px;
  top: 40px;
`;
const Field = styled.div`
  flex: 1;
  padding: 4px 21px 0 36px;
  display: flex;
  align-items: center;
  justify-content: space-between;
  border-radius: 0 42px 42px 0;
  background: linear-gradient(90deg, #f3f3f3 80%, #fafafa);
`;
const RedDot = styled.i`
  position: absolute;
  right: 0;
  top: 9px;
  width: 12px;
  height: 12px;
  border-radius: 50%;
  background: #dd3533;
`;
const Vote = styled.div`
  width: ${(p) => (p.$up ? 194 : 195)}px;
  height: 84px;
  margin-left: ${(p) => (p.$up ? 0 : -4)}px;
  padding-left: ${(p) => (p.$up ? 23 : 25)}px;
  display: flex;
  align-items: center;
  gap: 10px;
  border-radius: ${(p) => (p.$up ? "42px 0 0 42px" : "0 42px 42px 0")};
  clip-path: ${(p) => (p.$up ? "polygon(0 0, 100% 0, 95.5% 100%, 0 100%)" : "polygon(4.5% 0, 100% 0, 100% 100%, 0 100%)")};
  background: ${(p) => (p.$up ? "linear-gradient(#ffe9e8, #fdd5d1)" : "linear-gradient(#d5f8e2, #a3edc2)")};
  color: ${(p) => (p.$up ? "#e0483f" : "#16a352")};
`;

const Banner = styled.section`
  height: 107px;
  flex: none;
  margin: 0 15px 25px;
  padding: 5px 38px 0 42px;
  display: flex;
  align-items: center;
  justify-content: space-between;
  border-radius: 18px;
  background: #dae8fa;
  color: #4a8bd4;
`;

const BottomBar = styled.footer`
  position: relative;
  height: 169px;
  flex: none;
  display: flex;
  border-top: 10px solid #f3f3f3;
  background: #252525;
`;
const Sector = styled.div`
  width: 248px;
  padding-top: 11px;
  display: flex;
  flex-direction: column;
  align-items: center;
  ${Cn} {
    margin: 17px 0 28px;
  }
`;
const MenuItem = styled.div`
  width: 208px;
  padding-top: 20px;
  display: flex;
  flex-direction: column;
  align-items: center;
  color: #c8c8c8;
  font-family: "Noto Sans CJK SC", sans-serif;
  font-size: 35px;
  line-height: 54px;
  white-space: nowrap;
`;
const MenuDot = styled.i`
  position: absolute;
  left: 1009px;
  top: 24px;
  width: 18px;
  height: 18px;
  border-radius: 50%;
  background: #e03434;
`;
const Bubble = styled.div`
  position: absolute;
  left: ${(p) => p.$left}px;
  top: -9px;
  width: 112px;
  height: 112px;
  border-radius: 50%;
  background: rgba(116, 116, 116, 0.72);
  display: flex;
  align-items: center;
  justify-content: center;
`;

const SystemBar = styled.div`
  flex: 1;
  padding: 0 263px 6px;
  display: flex;
  align-items: center;
  justify-content: space-between;
  background: #161616;
`;
